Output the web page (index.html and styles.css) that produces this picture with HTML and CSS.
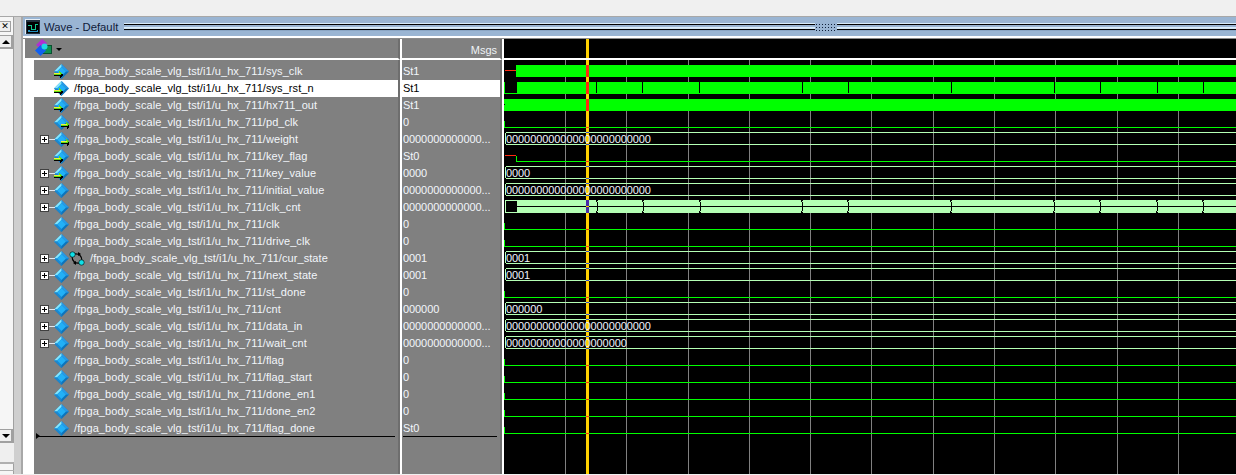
FILE: index.html
```html
<!DOCTYPE html>
<html lang="en">
<head>
<meta charset="utf-8">
<title>Wave - Default</title>
<link rel="stylesheet" href="styles.css">
</head>
<body>
<svg class="defs" width="0" height="0" aria-hidden="true">
  <defs>
    <g id="dia">
      <polygon points="7.5,0 15,7.5 7.5,15 0,7.5" fill="#0c74bc"/>
      <polygon points="7.5,0 15,7.5 12,7.5 7.5,3" fill="#2a9ae6"/>
      <polygon points="7.5,0 7.5,3 3,7.5 0,7.5" fill="#86e8ff"/>
      <polygon points="0,7.5 3,7.5 7.5,12 7.5,15" fill="#1c88d0"/>
      <polygon points="7.5,3 12,7.5 7.5,12 3,7.5" fill="#22b0f6"/>
    </g>
    <g id="arrow" shape-rendering="crispEdges">
      <path d="M1 4H6V7H7V6H8V5H9V3H8V2H7V1H6V3H1Z" fill="#000"/>
      <path d="M0 2H5V0H6V1H7V2H8V3H7V4H6V5H5V6H5V4H0Z" fill="#5fe010"/>
      <rect x="0" y="2" width="6" height="1" fill="#f0f040"/>
      <rect x="0" y="4" width="6" height="1" fill="#000"/>
    </g>
    <g id="sig-in"><use href="#dia"/><use href="#arrow" x="0" y="7"/></g>
    <g id="sig-out"><use href="#dia"/><use href="#arrow" x="7" y="7"/></g>
    <g id="bus">
      <rect x="506" y="0" width="730" height="1"/>
      <rect x="506" y="12" width="730" height="1"/>
      <rect x="505" y="1" width="1" height="11"/>
      <rect class="c-blue" x="586" y="0" width="3" height="1"/>
      <rect class="c-blue" x="586" y="12" width="3" height="1"/>
    </g>
    <g id="low">
      <rect class="c-green" x="504" y="0" width="732" height="1"/>
      <rect class="c-green" x="504" y="-6" width="1" height="6"/>
      <rect class="c-red" x="586" y="0" width="3" height="1"/>
    </g>
    <g id="tick">
      <rect class="c-black" x="0" y="0" width="1" height="11"/>
    </g>
    <g id="cut">
      <rect class="c-black" x="-1" y="0" width="2" height="1"/>
      <rect class="c-black" x="-1" y="1" width="1" height="1"/>
      <rect class="c-black" x="0" y="2" width="1" height="9"/>
      <rect class="c-black" x="-1" y="11" width="1" height="1"/>
      <rect class="c-black" x="-1" y="12" width="2" height="1"/>
    </g>
  </defs>
</svg>

<div class="topband"></div>
<div class="main">
  <aside class="dock">
    <div class="dock-btns">
      <button class="dbtn close" type="button">&#10005;</button>
      <button class="dbtn arrow up" type="button"><span class="tri-up"></span></button>
      <div class="dock-fill"></div>
      <button class="dbtn arrow down" type="button"><span class="tri-down"></span></button>
      <div class="dock-under"></div>
      <div class="dock-under2"></div>
    </div>
    <div class="dock-rail"></div>
  </aside>

  <section class="win">
    <header class="titlebar">
      <svg class="winicon" width="15" height="15" viewBox="0 0 15 15" shape-rendering="crispEdges">
        <rect width="15" height="15" fill="#20303c"/>
        <rect x="0" y="0" width="1" height="15" fill="#e8eef4"/>
        <rect x="0" y="0" width="15" height="1" fill="#e8eef4"/>
        <rect x="2" y="3" width="12" height="11" fill="#000"/>
        <path d="M3 6H7V10H10V5H13V6H11V11H6V7H3Z" fill="#10c890"/>
        <path d="M3 11H5V12H12V11H13V13H3Z" fill="#2090c0"/>
      </svg>
      <span class="wintitle">Wave - Default</span>
      <div class="grip grip-left"></div>
      <div class="gripdots"></div>
      <div class="grip"></div>
    </header>

    <div class="panes">
      <div class="head head-names">
        <svg class="palette" width="18" height="18" viewBox="0 0 18 18">
          <polygon points="1,6 7,0 12,4 6,10" fill="#b030d0"/>
          <rect x="7.5" y="6.5" width="9" height="8" fill="#109050" stroke="#0a5030"/>
          <polygon points="0,11.5 5.5,6 11,11.5 5.5,17" fill="#1060f0"/>
          <circle cx="9.5" cy="7.5" r="3" fill="#20d8e0"/>
        </svg>
        <span class="tri-down small"></span>
      </div>
      <div class="head head-vals">Msgs</div>
      <div class="head head-wave"><div class="cursor-top"></div></div>

      <div class="names">
        <div class="row"><svg class="ic"><use href="#sig-in"/></svg><span class="nm">/fpga_body_scale_vlg_tst/i1/u_hx_711/sys_clk</span></div>
        <div class="row sel"><svg class="ic"><use href="#sig-in"/></svg><span class="nm">/fpga_body_scale_vlg_tst/i1/u_hx_711/sys_rst_n</span></div>
        <div class="row"><svg class="ic"><use href="#sig-in"/></svg><span class="nm">/fpga_body_scale_vlg_tst/i1/u_hx_711/hx711_out</span></div>
        <div class="row"><svg class="ic"><use href="#sig-out"/></svg><span class="nm">/fpga_body_scale_vlg_tst/i1/u_hx_711/pd_clk</span></div>
        <div class="row exp"><span class="plus"></span><svg class="ic"><use href="#sig-out"/></svg><span class="nm">/fpga_body_scale_vlg_tst/i1/u_hx_711/weight</span></div>
        <div class="row"><svg class="ic"><use href="#sig-in"/></svg><span class="nm">/fpga_body_scale_vlg_tst/i1/u_hx_711/key_flag</span></div>
        <div class="row exp"><span class="plus"></span><svg class="ic"><use href="#sig-in"/></svg><span class="nm">/fpga_body_scale_vlg_tst/i1/u_hx_711/key_value</span></div>
        <div class="row exp"><span class="plus"></span><svg class="ic"><use href="#dia"/></svg><span class="nm">/fpga_body_scale_vlg_tst/i1/u_hx_711/initial_value</span></div>
        <div class="row exp"><span class="plus"></span><svg class="ic"><use href="#dia"/></svg><span class="nm">/fpga_body_scale_vlg_tst/i1/u_hx_711/clk_cnt</span></div>
        <div class="row"><svg class="ic"><use href="#dia"/></svg><span class="nm">/fpga_body_scale_vlg_tst/i1/u_hx_711/clk</span></div>
        <div class="row"><svg class="ic"><use href="#dia"/></svg><span class="nm">/fpga_body_scale_vlg_tst/i1/u_hx_711/drive_clk</span></div>
        <div class="row exp state"><span class="plus"></span><svg class="ic"><use href="#dia"/></svg>
          <svg class="stateic" width="16" height="15" viewBox="0 0 16 15">
            <path d="M5 3C10 2 13 5 13 10M11 12C6 13 3 10 3 5" fill="none" stroke="#000" stroke-width="1.2"/>
            <path d="M9 1L12 3 9 5ZM7 10L4 12 7 14Z" fill="#000"/>
            <circle cx="3.5" cy="3.5" r="2.7" fill="#10e0e8" stroke="#000" stroke-width=".6"/>
            <circle cx="12.5" cy="11.5" r="2.7" fill="#10e0e8" stroke="#000" stroke-width=".6"/>
          </svg>
          <span class="nm">/fpga_body_scale_vlg_tst/i1/u_hx_711/cur_state</span></div>
        <div class="row exp"><span class="plus"></span><svg class="ic"><use href="#dia"/></svg><span class="nm">/fpga_body_scale_vlg_tst/i1/u_hx_711/next_state</span></div>
        <div class="row"><svg class="ic"><use href="#dia"/></svg><span class="nm">/fpga_body_scale_vlg_tst/i1/u_hx_711/st_done</span></div>
        <div class="row exp"><span class="plus"></span><svg class="ic"><use href="#dia"/></svg><span class="nm">/fpga_body_scale_vlg_tst/i1/u_hx_711/cnt</span></div>
        <div class="row exp"><span class="plus"></span><svg class="ic"><use href="#dia"/></svg><span class="nm">/fpga_body_scale_vlg_tst/i1/u_hx_711/data_in</span></div>
        <div class="row exp"><span class="plus"></span><svg class="ic"><use href="#dia"/></svg><span class="nm">/fpga_body_scale_vlg_tst/i1/u_hx_711/wait_cnt</span></div>
        <div class="row"><svg class="ic"><use href="#dia"/></svg><span class="nm">/fpga_body_scale_vlg_tst/i1/u_hx_711/flag</span></div>
        <div class="row"><svg class="ic"><use href="#dia"/></svg><span class="nm">/fpga_body_scale_vlg_tst/i1/u_hx_711/flag_start</span></div>
        <div class="row"><svg class="ic"><use href="#dia"/></svg><span class="nm">/fpga_body_scale_vlg_tst/i1/u_hx_711/done_en1</span></div>
        <div class="row"><svg class="ic"><use href="#dia"/></svg><span class="nm">/fpga_body_scale_vlg_tst/i1/u_hx_711/done_en2</span></div>
        <div class="row"><svg class="ic"><use href="#dia"/></svg><span class="nm">/fpga_body_scale_vlg_tst/i1/u_hx_711/flag_done</span></div>
        <div class="endline"><span class="endtri"></span></div>
      </div>

      <div class="vals">
        <div class="row">St1</div>
        <div class="row sel">St1</div>
        <div class="row">St1</div>
        <div class="row">0</div>
        <div class="row">0000000000000...</div>
        <div class="row">St0</div>
        <div class="row">0000</div>
        <div class="row">0000000000000...</div>
        <div class="row">0000000000000...</div>
        <div class="row">0</div>
        <div class="row">0</div>
        <div class="row">0001</div>
        <div class="row">0001</div>
        <div class="row">0</div>
        <div class="row">000000</div>
        <div class="row">0000000000000...</div>
        <div class="row">0000000000000...</div>
        <div class="row">0</div>
        <div class="row">0</div>
        <div class="row">0</div>
        <div class="row">0</div>
        <div class="row">St0</div>
        <div class="endline"></div>
      </div>

      <div class="wave">
        <svg class="wavesvg" width="732" height="414" viewBox="504 61 732 414" shape-rendering="crispEdges">
          <rect x="504" y="61" width="732" height="414" fill="#000"/>
          <g class="c-grid">
            <rect x="565" y="61" width="1" height="414"/><rect x="626" y="61" width="1" height="414"/>
            <rect x="688" y="61" width="1" height="414"/><rect x="749" y="61" width="1" height="414"/>
            <rect x="810" y="61" width="1" height="414"/><rect x="871" y="61" width="1" height="414"/>
            <rect x="933" y="61" width="1" height="414"/><rect x="994" y="61" width="1" height="414"/>
            <rect x="1055" y="61" width="1" height="414"/><rect x="1117" y="61" width="1" height="414"/>
            <rect x="1178" y="61" width="1" height="414"/>
          </g>
          <rect class="c-cursor" x="586" y="61" width="3" height="414"/>

          <!-- sys_clk -->
          <rect class="c-red" x="505" y="71" width="11" height="1"/>
          <rect class="c-green" x="516" y="66" width="720" height="12"/>
          <!-- sys_rst_n -->
          <rect class="c-green" x="504" y="83" width="1" height="12"/>
          <rect class="c-green" x="504" y="94" width="13" height="1"/>
          <rect class="c-green" x="517" y="83" width="719" height="12"/>
          <!-- hx711_out -->
          <rect class="c-green" x="504" y="100" width="732" height="12"/>
          <rect class="c-black" x="504" y="105" width="1" height="1"/>
          <g class="c-red">
            <rect x="586" y="66" width="3" height="12"/>
            <rect x="586" y="83" width="3" height="12"/>
            <rect x="586" y="100" width="3" height="12"/>
          </g>
          <g>
            <use href="#tick" x="596" y="83"/><use href="#tick" x="642" y="83"/>
            <use href="#tick" x="699" y="83"/><use href="#tick" x="802" y="83"/>
            <use href="#tick" x="848" y="83"/><use href="#tick" x="951" y="83"/>
            <use href="#tick" x="1054" y="83"/><use href="#tick" x="1100" y="83"/>
            <use href="#tick" x="1157" y="83"/><use href="#tick" x="1203" y="83"/>
          </g>

          <use href="#low" y="128"/>
          <!-- key_flag -->
          <rect class="c-red" x="505" y="156" width="11" height="1"/>
          <rect class="c-green" x="516" y="157" width="1" height="5"/>
          <rect class="c-green" x="516" y="162" width="720" height="1"/>
          <rect class="c-red" x="586" y="162" width="3" height="1"/>

          <g class="c-bus">
            <use href="#bus" y="133"/><use href="#bus" y="167"/><use href="#bus" y="184"/>
            <use href="#bus" y="252"/><use href="#bus" y="269"/><use href="#bus" y="303"/>
            <use href="#bus" y="320"/><use href="#bus" y="337"/>
          </g>

          <!-- clk_cnt -->
          <rect class="c-bus" x="505" y="201" width="12" height="1"/>
          <rect class="c-bus" x="505" y="213" width="12" height="1"/>
          <rect class="c-bus" x="505" y="202" width="1" height="11"/>
          <rect class="c-bus" x="517" y="201" width="719" height="13"/>
          <rect class="c-black" x="517" y="207" width="719" height="1"/>
          <g class="c-purple">
            <rect x="586" y="201" width="3" height="6"/>
            <rect x="586" y="208" width="3" height="6"/>
          </g>
          <rect class="c-cursor" x="586" y="207" width="3" height="1"/>
          <use href="#cut" x="597" y="201"/><use href="#cut" x="643" y="201"/>
          <use href="#cut" x="700" y="201"/><use href="#cut" x="802" y="201"/>
          <use href="#cut" x="848" y="201"/><use href="#cut" x="951" y="201"/>
          <use href="#cut" x="1054" y="201"/><use href="#cut" x="1100" y="201"/>
          <use href="#cut" x="1157" y="201"/><use href="#cut" x="1203" y="201"/>

          <use href="#low" y="230"/><use href="#low" y="247"/><use href="#low" y="298"/>
          <use href="#low" y="366"/><use href="#low" y="383"/><use href="#low" y="400"/>
          <use href="#low" y="417"/><use href="#low" y="434"/>

          <g class="bustext">
            <text x="506" y="144">000000000000000000000000</text>
            <text x="506" y="178">0000</text>
            <text x="506" y="195">000000000000000000000000</text>
            <text x="506" y="263">0001</text>
            <text x="506" y="280">0001</text>
            <text x="506" y="314">000000</text>
            <text x="506" y="331">000000000000000000000000</text>
            <text x="506" y="348">00000000000000000000</text>
          </g>
        </svg>
      </div>
    </div>
  </section>
</div>
</body>
</html>
```

FILE: styles.css
```css
* { box-sizing: border-box; }
html, body { margin: 0; height: 475px; width: 1236px; overflow: hidden; background: #f0f0f0; }
body { font-family: "Liberation Sans", Arial, sans-serif; font-size: 11px; }
.defs { position: absolute; }

.topband { height: 17px; background: #f0f0f0; border-bottom: 1px solid #a8a8a8; }
.main { display: flex; height: 457px; background: #fff; }

/* left dock */
.dock { display: flex; width: 23px; flex: none; }
.dock-btns {
  width: 14px; display: flex; flex-direction: column; align-items: flex-start;
  padding-top: 4px; border-right: 1px solid #a0a0a0;
  background: #f6f6f6 radial-gradient(#e4e4e4 .5px, transparent .6px) 0 0 / 2px 2px;
}
.dock-rail { flex: 1; background: #cfcfcf; border-right: 2px solid #a8a8a8; }
.dbtn {
  padding: 0; margin: 0; width: 11px; border: 1px solid #a0a0a0; border-left: 0;
  background: #efefef; display: flex; align-items: center; justify-content: center; color: #000;
}
.close { height: 11px; font-size: 9px; line-height: 1; font-family: "DejaVu Sans", sans-serif; font-weight: bold; }
.arrow { width: 13px; height: 14px; border-right-width: 2px; border-bottom-width: 2px; margin-top: 3px; }
.dock-fill { flex: 1; }
.down { margin-top: 0; margin-bottom: 0; }
.dock-under { width: 14px; height: 21px; background: #efefef; border-bottom: 2px solid #b0b0b0; }
.dock-under2 { width: 14px; height: 7px; border-bottom: 1px solid #b0b0b0; margin-bottom: 3px; }
.tri-up, .tri-down { width: 0; height: 0; border-left: 4px solid transparent; border-right: 4px solid transparent; }
.tri-up { border-bottom: 4px solid #000; }
.tri-down { border-top: 4px solid #000; }
.tri-down.small { border-left-width: 3px; border-right-width: 3px; border-top-width: 3px; margin-left: 3px; margin-top: 3px; }

/* window */
.win { flex: 1; min-width: 0; display: flex; flex-direction: column; background: #fff; }
.titlebar {
  height: 19px; flex: none; background: #9ab5d3; display: flex; align-items: center;
  padding: 0 0 0 2px; color: #10203a;
}
.winicon { flex: none; margin-right: 4px; }
.wintitle { font-size: 11.3px; white-space: nowrap; width: 80px; flex: none; }
.grip {
  flex: 1; height: 8px; margin-top: 1px;
  background: linear-gradient(#d8ecfa 0 1px, #000 1px 2px, #9ab5d3 2px 4px, #d8ecfa 4px 5px, #cfe4f4 5px 6px, #000 6px 7px, #8ba6c4 7px 8px);
}
.grip-left { flex: none; width: 691px; }
.gripdots {
  width: 22px; height: 8px; flex: none; margin-top: 1px;
  background: #9ab5d3 radial-gradient(#10203a 40%, transparent 45%) 0 0 / 3px 3px;
}

.panes {
  flex: 1; min-height: 0; margin-top: 2px; border-top: 1px solid #8a8a8a;
  display: grid; grid-template-columns: 377px 104px 1fr; grid-template-rows: 21px 1fr;
  background: #fff;
}
.head { background: #808080; border-bottom: 2px solid #fff; }
.head-names { margin-left: 2px; display: flex; align-items: center; padding: 0 0 1px 10px; border-right: 2px solid #6e6e6e; }
.head-vals {
  text-align: right; color: #eef2f6; padding: 3px 3px 0 0; line-height: 16px;
  border-left: 2px solid #fff; border-right: 2px solid #6e6e6e; margin-right: 2px;
}
.head-wave { background: #000; position: relative; }
.cursor-top { position: absolute; left: 82px; top: 0; bottom: 0; width: 3px; background: #ffd000; }

.names, .vals { background: #808080; padding-top: 3px; position: relative; color: #f2f6fb; }
.names { margin-left: 11px; border-right: 2px solid #6e6e6e; }
.vals { border-left: 2px solid #fff; border-right: 2px solid #6e6e6e; margin-right: 2px; }
.row { height: 17px; line-height: 16px; white-space: nowrap; display: flex; align-items: center; }
.vals .row { padding-left: 1px; padding-bottom: 2px; letter-spacing: -0.08px; }
.nm { margin-top: -2px; letter-spacing: 0.07px; }
.sel { background: #fff; color: #000; }
.names .row { padding-left: 20px; position: relative; }
.ic { width: 15px; height: 15px; flex: none; margin-right: 5px; }
.plus {
  position: absolute; left: 6px; top: 4px; width: 9px; height: 9px;
  background: #fff linear-gradient(#000, #000) center / 5px 1px no-repeat; border: 1px solid #404040;
}
.plus::before { content: ""; position: absolute; left: 3px; top: 1px; width: 1px; height: 5px; background: #000; }
.plus::after { content: ""; position: absolute; left: 8px; top: 3px; width: 6px; height: 1px; background: #dfe6ee; }
.stateic { flex: none; width: 16px; height: 15px; margin: 0 5px 0 -5px; }
.endline { height: 1px; background: #000; position: absolute; top: 376px; left: 2px; right: 3px; }
.vals .endline { left: 1px; right: 3px; }
.endtri {
  position: absolute; left: 0; top: -3px; width: 0; height: 0;
  border-left: 4px solid #000; border-top: 3px solid transparent; border-bottom: 3px solid transparent;
}

.wave { background: #000; overflow: hidden; }
.wavesvg { display: block; }
.c-grid { fill: #808080; }
.c-cursor { fill: #ffd000; }
.c-green { fill: #00ff00; }
.c-red { fill: #ff2a10; }
.c-black { fill: #000; }
.c-bus { fill: #b4ffb4; }
.c-blue { fill: #3a4cc8; }
.c-purple { fill: #4a2ca8; }
.bustext { fill: #f0f4ff; font-family: "Liberation Sans", sans-serif; font-size: 11px; letter-spacing: -0.08px; }
.bustext text { shape-rendering: auto; }
```
